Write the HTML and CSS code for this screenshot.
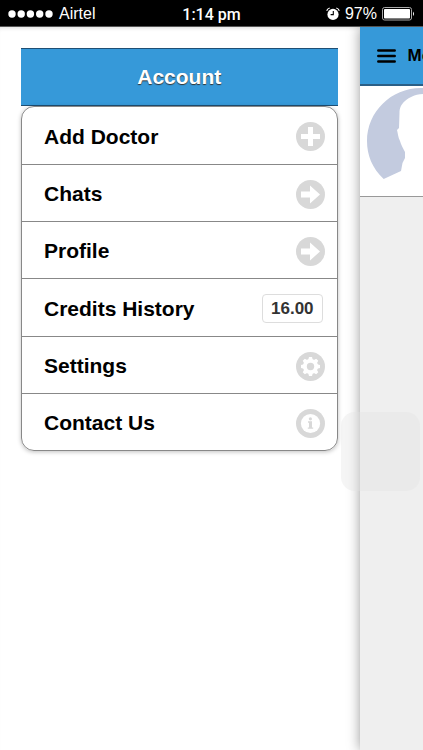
FILE: index.html
```html
<!DOCTYPE html>
<html lang="en">
<head>
<meta charset="utf-8">
<meta name="viewport" content="width=device-width, initial-scale=1">
<title>Account</title>
<link rel="stylesheet" href="styles.css">
</head>
<body>
<div class="status">
  <div class="status-side">
    <svg class="signal" width="46" height="8" viewBox="0 0 46 8" fill="#fff" aria-hidden="true"><circle cx="4" cy="4" r="3.7"/><circle cx="13.2" cy="4" r="3.7"/><circle cx="22.4" cy="4" r="3.7"/><circle cx="31.7" cy="4" r="3.7"/><circle cx="41" cy="4" r="3.7"/></svg>
    <span>Airtel</span>
  </div>
  <div class="status-time">1:14 pm</div>
  <div class="status-side status-right">
    <svg width="14" height="14" viewBox="0 0 14 14" aria-hidden="true"><circle cx="7" cy="7.4" r="5.6" fill="#fff"/><path d="M7.3 4v3.6H4.6" fill="none" stroke="#000" stroke-width="1.1"/><path d="M.7 3.8Q1.4 1.6 3.7 1M13.3 3.8Q12.6 1.6 10.3 1" fill="none" stroke="#fff" stroke-width="1.2"/></svg>
    <span>97%</span>
    <svg width="33" height="14" viewBox="0 0 33 14" aria-hidden="true"><rect x=".5" y=".5" width="29" height="12.5" rx="2" fill="none" stroke="#aaa"/><rect x="2" y="2" width="26" height="9.5" rx=".8" fill="#fff"/><path d="M31 4.500q2 2.300 0 4.600z" fill="#fff"/></svg>
  </div>
</div>
<div class="app">
  <nav class="menu" aria-label="Account">
    <h1 class="menu-title">Account</h1>
    <ul class="menu-list">
      <li><a href="#add">Add Doctor
        <svg class="icon" viewBox="0 0 29 29" aria-hidden="true"><circle cx="14.5" cy="14.5" r="14.5"/><path class="cut" d="M12 5h5v7h7v5h-7v7h-5v-7H5v-5h7z"/></svg></a></li>
      <li><a href="#chats">Chats
        <svg class="icon" viewBox="0 0 29 29" aria-hidden="true"><circle cx="14.5" cy="14.5" r="14.5"/><path class="cut" d="M5 11.5h9V5.500l10 9-10 9v-6H5z"/></svg></a></li>
      <li><a href="#profile">Profile
        <svg class="icon" viewBox="0 0 29 29" aria-hidden="true"><circle cx="14.5" cy="14.5" r="14.5"/><path class="cut" d="M5 11.5h9V5.500l10 9-10 9v-6H5z"/></svg></a></li>
      <li><a href="#credits">Credits History <span class="count">16.00</span></a></li>
      <li><a href="#settings">Settings
        <svg class="icon" viewBox="0 0 29 29" aria-hidden="true"><circle cx="14.5" cy="14.5" r="14.5"/><g class="cut"><circle cx="14.5" cy="14.5" r="7.600"/><path id="tooth" d="M12.2 8 13 5h3l.8 3v13l-.8 3h-3l-.8-3z"/><use href="#tooth" transform="rotate(45 14.5 14.5)"/><use href="#tooth" transform="rotate(90 14.5 14.5)"/><use href="#tooth" transform="rotate(135 14.5 14.5)"/></g><circle cx="14.5" cy="14.5" r="3.7"/></svg></a></li>
      <li><a href="#contact">Contact Us
        <svg class="icon" viewBox="0 0 29 29" aria-hidden="true"><circle cx="14.5" cy="14.5" r="14.5"/><circle class="cut" cx="14.5" cy="14.5" r="9.6"/><path d="M12 12.200h4v6.200h1.200v1.400h-5.400v-1.400H13v-4.700h-1z"/><circle cx="14.4" cy="9.8" r="1.6"/></svg></a></li>
    </ul>
  </nav>
  <main class="page">
    <header class="page-head">
      <button class="toggle" type="button" aria-label="Menu"><svg width="19" height="14" viewBox="0 0 19 14" aria-hidden="true"><path d="M1.3 1.4h16.4M1.3 7h16.4M1.3 12.6h16.4" stroke="#000" stroke-width="2.5" stroke-linecap="round"/></svg></button>
      <span>Me</span>
    </header>
    <div class="card">
      <svg width="108" height="108" viewBox="0 0 108 108" aria-hidden="true"><path fill="#c3cbdf" d="M16.7 92C5 81 0 68 0 54 0 25 24 1 54 1h2v6C47 7.500 42 10.500 38 14c-4 3.500-5.500 7-5.500 12L32 41l-2 2c1 4 1 7 3 11 1 4 3 7 5 11v6l-2.500 5-1.500 8z"/></svg>
    </div>
  </main>
</div>
<div class="assist" aria-hidden="true"></div>
</body>
</html>
```
FILE: styles.css
```css
* {
  box-sizing: border-box;
}

body {
  display: flex;
  flex-direction: column;
  min-height: 100vh;
  margin: 0;
  background: #fff;
  font-family: "Liberation Sans", Arial, sans-serif;
  color: #000;
}

.status {
  display: flex;
  align-items: center;
  height: 27px;
  padding: 2px 8px 0;
  border-bottom: 1px solid #555;
  background: #000;
  color: #fff;
  font-size: 16px;
}

.status-side {
  display: flex;
  flex: 1;
  align-items: center;
  gap: 5px;
}

.status-right {
  justify-content: flex-end;
}

.status-time {
  font-family: Roboto, "Liberation Sans", sans-serif;
  font-weight: 500;
}

.app {
  display: flex;
  flex: 1;
  overflow: hidden;
}

.menu {
  flex: 0 0 85%;
  padding: 21px 22px 0 21px;
  box-shadow: inset 0 4px 4px -3px #ddd;
}

.menu-title {
  margin: 0;
  border: solid #1f4f74;
  border-width: 1px 0;
  background: #3699d9;
  color: #fff;
  font-size: 21px;
  line-height: 56px;
  text-align: center;
  text-shadow: 0 1px 1px #333;
}

.menu-list {
  margin: 0;
  padding: 0;
  border: 1px solid #888;
  border-radius: 13px;
  box-shadow: 0 1px 4px rgba(0, 0, 0, 0.25);
  list-style: none;
}

.menu-list li + li {
  border-top: 1px solid #888;
}

.menu-list a {
  display: flex;
  align-items: center;
  justify-content: space-between;
  height: 56px;
  padding: 2px 12px 0 22px;
  color: inherit;
  font-size: 21px;
  font-weight: bold;
  text-decoration: none;
}

.menu-list li:nth-child(3n + 1) a {
  height: 57px;
}

.icon {
  width: 29px;
  height: 29px;
  fill: #d8d8d8;
}

.cut {
  fill: #fff;
}

.count {
  padding: 0 8px;
  margin-right: 2px;
  border: 1px solid #ddd;
  border-radius: 4px;
  color: #333;
  font-size: 17px;
  line-height: 27px;
}

.page {
  flex: 1;
  min-width: 0;
  background: #efefef;
  box-shadow: 0 0 12px rgba(0, 0, 0, 0.4);
}

.page-head {
  display: flex;
  align-items: center;
  gap: 12px;
  height: 59px;
  padding-left: 17px;
  border-bottom: 2px solid #2b5f86;
  background: #3699d9;
  font-size: 17px;
  font-weight: bold;
  overflow: hidden;
}

.toggle {
  display: flex;
  padding: 0;
  border: 0;
  background: none;
}

.card {
  height: 111px;
  padding: 1px 0 0 7px;
  border-bottom: 1px solid #999;
  background: #fff;
  overflow: hidden;
}

.assist {
  position: fixed;
  right: 3px;
  top: 412px;
  width: 79px;
  height: 79px;
  border-radius: 14px;
  background: rgba(225, 225, 225, 0.35);
}
```
